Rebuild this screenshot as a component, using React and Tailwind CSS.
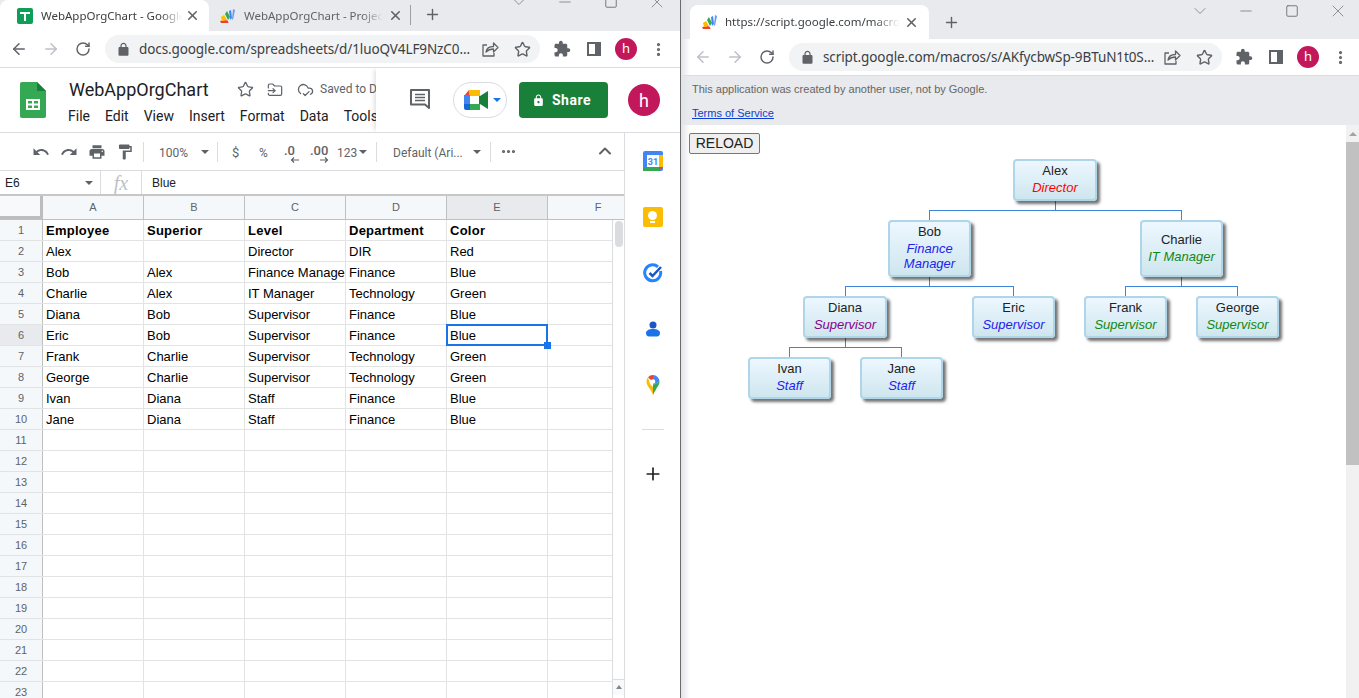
import React from "react";
import { ArrowLeft, ArrowRight, RotateCw, Star, X, Plus, ChevronDown, Minus, Square, MoreVertical, ChevronUp, FolderInput, CloudCheck, MoreHorizontal } from "lucide-react";

const columns = ["A", "B", "C", "D", "E", "F"];
const rows = [
  ["Employee", "Superior", "Level", "Department", "Color"],
  ["Alex", "", "Director", "DIR", "Red"],
  ["Bob", "Alex", "Finance Manager", "Finance", "Blue"],
  ["Charlie", "Alex", "IT Manager", "Technology", "Green"],
  ["Diana", "Bob", "Supervisor", "Finance", "Blue"],
  ["Eric", "Bob", "Supervisor", "Finance", "Blue"],
  ["Frank", "Charlie", "Supervisor", "Technology", "Green"],
  ["George", "Charlie", "Supervisor", "Technology", "Green"],
  ["Ivan", "Diana", "Staff", "Finance", "Blue"],
  ["Jane", "Diana", "Staff", "Finance", "Blue"],
];
const allRows = Array.from({ length: 23 }, (_, i) => rows[i] || ["", "", "", "", ""]);

const nodes = [
  { name: "Alex", title: "Director", color: "text-[#ff0000]", x: 332, y: 34, w: 84, h: 42 },
  { name: "Bob", title: "Finance Manager", color: "text-[#2222ee]", x: 207, y: 95, w: 83, h: 57 },
  { name: "Charlie", title: "IT Manager", color: "text-[#118811]", x: 459, y: 95, w: 83, h: 57 },
  { name: "Diana", title: "Supervisor", color: "text-[#880088]", x: 122, y: 171, w: 84, h: 42 },
  { name: "Eric", title: "Supervisor", color: "text-[#2222ee]", x: 291, y: 171, w: 83, h: 42 },
  { name: "Frank", title: "Supervisor", color: "text-[#118811]", x: 403, y: 171, w: 83, h: 42 },
  { name: "George", title: "Supervisor", color: "text-[#118811]", x: 515, y: 171, w: 83, h: 42 },
  { name: "Ivan", title: "Staff", color: "text-[#2222ee]", x: 67, y: 232, w: 83, h: 42 },
  { name: "Jane", title: "Staff", color: "text-[#2222ee]", x: 179, y: 232, w: 83, h: 42 },
];

// material style filled icons
const Mat = ({ d, size = 18, className = "", color = "#5f6368" }) => (
  <svg width={size} height={size} viewBox="0 0 24 24" className={className}>
    <path d={d} fill={color} />
  </svg>
);
const undoPath = "M12.5 8c-2.65 0-5.05.99-6.9 2.6L2 7v9h9l-3.62-3.62c1.39-1.16 3.16-1.88 5.12-1.88 3.54 0 6.55 2.31 7.6 5.5l2.37-.78C21.08 11.03 17.15 8 12.5 8z";
const redoPath = "M18.4 10.6C16.55 8.99 14.15 8 11.5 8c-4.65 0-8.58 3.03-9.96 7.22L3.9 16c1.05-3.19 4.05-5.5 7.6-5.5 1.95 0 3.73.72 5.12 1.88L13 16h9V7l-3.6 3.6z";
const printPath = "M19 8H5c-1.66 0-3 1.34-3 3v6h4v4h12v-4h4v-6c0-1.66-1.34-3-3-3zm-3 11H8v-5h8v5zm3-7c-.55 0-1-.45-1-1s.45-1 1-1 1 .45 1 1-.45 1-1 1zm-1-9H6v4h12V3z";
const paintPath = "M18 4V3c0-.55-.45-1-1-1H5c-.55 0-1 .45-1 1v4c0 .55.45 1 1 1h12c.55 0 1-.45 1-1V6h1v4H9v11c0 .55.45 1 1 1h2c.55 0 1-.45 1-1v-9h8V4h-3z";
const puzzlePath = "M20.5 11H19V7c0-1.1-.9-2-2-2h-4V3.5C13 2.12 11.88 1 10.5 1S8 2.12 8 3.5V5H4c-1.1 0-1.99.9-1.99 2v3.8H3.5c1.49 0 2.7 1.21 2.7 2.7s-1.21 2.7-2.7 2.7H2V20c0 1.1.9 2 2 2h3.8v-1.500c0-1.49 1.21-2.7 2.7-2.7 1.49 0 2.7 1.21 2.7 2.7V22H17c1.1 0 2-.9 2-2v-4h1.5c1.38 0 2.5-1.12 2.5-2.5S21.88 11 20.5 11z";
const lockPath = "M18 8h-1V6c0-2.76-2.24-5-5-5S7 3.24 7 6v2H6c-1.1 0-2 .9-2 2v10c0 1.1.9 2 2 2h12c1.1 0 2-.9 2-2V10c0-1.1-.9-2-2-2zm-6 9c-1.1 0-2-.9-2-2s.9-2 2-2 2 .9 2 2-.9 2-2 2zm3.100-9H8.900V6c0-1.710 1.390-3.100 3.100-3.100 1.710 0 3.100 1.390 3.100 3.100v2z";
const solidLockPath = "M18 8h-1V6c0-2.76-2.24-5-5-5S7 3.24 7 6v2H6c-1.1 0-2 .9-2 2v10c0 1.1.9 2 2 2h12c1.1 0 2-.9 2-2V10c0-1.1-.9-2-2-2zM9 8V6c0-1.66 1.34-3 3-3s3 1.340 3 3v2z";

const SheetsTabIcon = () => (
  <svg width="16" height="16" viewBox="0 0 16 16" className="shrink-0">
    <rect width="16" height="16" rx="2" fill="#0f9d58" />
    <path d="M3 4h10v2H9v7H7V6H3z" fill="#fff" />
  </svg>
);

const ScriptIcon = () => (
  <svg width="16" height="16" viewBox="0 0 16 16" className="shrink-0">
    <path d="M0 13l6-1 2 1 .5 2H1z" fill="#ea4335" />
    <path d="M1 9l3-2 3 5-5 1z" fill="#fbbc04" />
    <path d="M5 6l2-3 3 6-2 3z" fill="#34a853" />
    <path d="M9 3l2-1 1 8-2 2z" fill="#4285f4" />
    <path d="M13 1l2 1-2 10-1-1z" fill="#669df6" />
  </svg>
);

const PageShareIcon = ({ className }) => (
  <svg width="18" height="18" viewBox="0 0 18 18" className={className} fill="none" stroke="#5f6368" strokeWidth="1.300" strokeLinejoin="round">
    <path d="M6 5H2v11h11v-3" />
    <path d="M5 12c.5-3.500 3.500-5.500 7.500-5.500V3L17 7.500 12.500 12V9c-3 0-5.500 1-7.500 3z" />
  </svg>
);

const SidePanelIcon = () => (
  <div className="w-[14px] h-[14px] border-[2px] border-[#5f6368] flex justify-end">
    <div className="w-[4px] h-full bg-[#5f6368]" />
  </div>
);

const Avatar = () => (
  <div className="w-[22px] h-[22px] rounded-full bg-[#c2185b] text-white text-[13px] flex items-center justify-center font-['Noto_Sans',sans-serif]">h</div>
);

const ChromeButton = ({ x, children }) => (
  <div className="absolute top-0 bottom-0 flex items-center justify-center w-[24px] -ml-[12px]" style={{ left: x }}>
    {children}
  </div>
);

// navShift moves back/forward/reload and the pill start, toolShift the things on the right
const BrowserToolbar = ({ url, backDim, navShift = 0, toolShift = 0 }) => (
  <div className="relative h-[37px] shrink-0 bg-white border-b border-[#dadce0]">
    <ChromeButton x={19 + navShift}><ArrowLeft size={18} strokeWidth={2} className={backDim ? "text-[#bdc1c6]" : "text-[#5f6368]"} /></ChromeButton>
    <ChromeButton x={51 + navShift}><ArrowRight size={18} strokeWidth={2} className="text-[#bdc1c6]" /></ChromeButton>
    <ChromeButton x={83 + navShift}><RotateCw size={16} strokeWidth={2.2} className="text-[#5f6368]" /></ChromeButton>
    <div
      className="absolute top-[4px] h-[28px] rounded-full bg-[#f1f3f4] flex items-center pl-[11px]"
      style={{ left: 105 + navShift, width: 435 + toolShift - navShift }}
    >
      <Mat d={solidLockPath} size={15} className="shrink-0" />
      <span className="ml-[8px] text-[13.5px] text-[#3c4043] whitespace-nowrap font-['Noto_Sans',sans-serif] tracking-[-0.1px]">{url}</span>
      <PageShareIcon className="absolute right-[41px]" />
      <Star size={17} strokeWidth={2} className="absolute right-[9px] text-[#5f6368]" />
    </div>
    <ChromeButton x={562 + toolShift}><Mat d={puzzlePath} size={18} /></ChromeButton>
    <ChromeButton x={594 + toolShift}><SidePanelIcon /></ChromeButton>
    <ChromeButton x={626 + toolShift}><Avatar /></ChromeButton>
    <ChromeButton x={658 + toolShift}><MoreVertical size={17} strokeWidth={2.5} className="text-[#5f6368]" /></ChromeButton>
  </div>
);

const WindowControls = ({ top }) => (
  <div className="absolute left-[496px] flex text-[#6f7377]" style={{ top }}>
    <div className="w-[46px] h-[14px] flex items-center justify-center"><ChevronDown size={20} strokeWidth={0.9} /></div>
    <div className="w-[46px] h-[14px] flex items-center justify-center"><Minus size={18} strokeWidth={1} /></div>
    <div className="w-[46px] h-[14px] flex items-center justify-center"><Square size={14} strokeWidth={1.600} /></div>
    <div className="w-[46px] h-[14px] flex items-center justify-center"><X size={20} strokeWidth={0.9} /></div>
  </div>
);

const ToolSep = () => <div className="w-px h-[20px] bg-[#dadce0]" />;
const Caret = () => <div className="w-0 h-0 border-x-[4px] border-x-transparent border-t-[4px] border-t-[#5f6368]" />;

const SheetsHeader = () => (
  <div className="relative h-[65px] shrink-0 bg-white border-b border-[#dadce0] overflow-hidden font-['Roboto',sans-serif]">
    <svg className="absolute left-[20px] top-[14px]" width="26" height="36" viewBox="0 0 26 36">
      <path d="M2 0h15l9 9v25a2 2 0 0 1-2 2H2a2 2 0 0 1-2-2V2a2 2 0 0 1 2-2z" fill="#34a853" />
      <path d="M17 0l9 9h-9z" fill="#188038" />
      <path d="M6 17h14v11H6zm2 2v2.500h4V19zm6 0v2.500h4V19zm-6 4.500V26h4v-2.500zm6 0V26h4v-2.500z" fill="#fff" fillRule="evenodd" />
    </svg>
    <span className="absolute left-[69px] top-[10px] text-[18px] leading-[24px] text-[#202124]">WebAppOrgChart</span>
    <Star size={17} strokeWidth={1.8} className="absolute left-[237px] top-[13px] text-[#5f6368]" />
    <FolderInput size={16} strokeWidth={1.8} className="absolute left-[267px] top-[14px] text-[#5f6368]" />
    <CloudCheck size={17} strokeWidth={1.8} className="absolute left-[297px] top-[13px] text-[#5f6368]" />
    <span className="absolute left-[320px] top-[13px] text-[12px] leading-[16px] text-[#5f6368] whitespace-nowrap">Saved to Drive</span>
    <div className="absolute left-[68px] top-[39px] flex gap-[15px] text-[14px] leading-[18px] text-[#202124]">
      <span>File</span>
      <span>Edit</span>
      <span>View</span>
      <span>Insert</span>
      <span>Format</span>
      <span>Data</span>
      <span>Tools</span>
    </div>
    <div className="absolute left-[376px] right-0 top-0 bottom-0 bg-white shadow-[-4px_0_4px_-2px_rgba(0,0,0,0.12)]">
      <svg className="absolute left-[34px] top-[21px]" width="20" height="20" viewBox="0 0 20 20">
        <path d="M1 1h18v18l-4-3.500H1z" fill="none" stroke="#5f6368" strokeWidth="2" strokeLinejoin="round" />
        <path d="M5 5.500h10M5 8.500h10M5 11.500h10" stroke="#5f6368" strokeWidth="1.500" />
      </svg>
      <div className="absolute left-[77px] top-[14px] w-[54px] h-[36px] rounded-full border border-[#dadce0] flex items-center pl-[10px]">
        <svg width="24" height="20" viewBox="0 0 24 20">
          <path d="M5 0h11v6H5z" fill="#fbbc04" />
          <path d="M5 0v6H0z" fill="#ea4335" />
          <path d="M0 5h6v9H0z" fill="#4285f4" />
          <path d="M0 14h6v6H2a2 2 0 0 1-2-2z" fill="#1967d2" />
          <path d="M6 14h10v6H6z" fill="#34a853" />
          <path d="M6 6h9v8H6z" fill="#fff" />
          <path d="M15 6l1 0 8-5v18l-8-5-1 0z" fill="#188038" />
        </svg>
        <div className="ml-[5px] w-0 h-0 border-x-[4px] border-x-transparent border-t-[4px] border-t-[#1a73e8]" />
      </div>
      <div className="absolute left-[143px] top-[14px] w-[89px] h-[36px] rounded-[4px] bg-[#188038] text-white flex items-center justify-center gap-[7px] pr-[4px] text-[14px] font-bold tracking-[0.5px]">
        <Mat d={lockPath} size={13} color="#fff" />
        <span>Share</span>
      </div>
      <div className="absolute left-[252px] top-[16px] w-[32px] h-[32px] rounded-full bg-[#c2185b] text-white text-[18px] flex items-center justify-center">h</div>
    </div>
  </div>
);

const SheetsToolbar = () => (
  <div className="relative h-[38px] shrink-0 bg-white border-b border-[#dadce0] font-['Roboto',sans-serif] text-[12px] text-[#5f6368]">
    <Mat d={undoPath} className="absolute left-[32px] top-[10px]" />
    <Mat d={redoPath} className="absolute left-[60px] top-[10px]" />
    <Mat d={printPath} className="absolute left-[88px] top-[10px]" />
    <Mat d={paintPath} className="absolute left-[116px] top-[10px]" />
    <div className="absolute left-[143px] top-[9px]"><ToolSep /></div>
    <span className="absolute left-[159px] top-[11px]">100%</span>
    <div className="absolute left-[201px] top-[17px]"><Caret /></div>
    <div className="absolute left-[217px] top-[9px]"><ToolSep /></div>
    <span className="absolute left-[232px] top-[10px] text-[13px]">$</span>
    <span className="absolute left-[259px] top-[11px]">%</span>
    <span className="absolute left-[284px] top-[8px] text-[13px] font-medium">.0</span>
    <svg className="absolute left-[290px] top-[24px]" width="9" height="6" viewBox="0 0 9 6"><path d="M9 3H2M4 .5L1.500 3 4 5.500" fill="none" stroke="#5f6368" strokeWidth="1.200" /></svg>
    <span className="absolute left-[310px] top-[8px] text-[13px] font-medium">.00</span>
    <svg className="absolute left-[320px] top-[24px]" width="9" height="6" viewBox="0 0 9 6"><path d="M0 3h7M5 .5L7.500 3 5 5.500" fill="none" stroke="#5f6368" strokeWidth="1.200" /></svg>
    <span className="absolute left-[337px] top-[11px]">123</span>
    <div className="absolute left-[359px] top-[17px]"><Caret /></div>
    <div className="absolute left-[376px] top-[9px]"><ToolSep /></div>
    <span className="absolute left-[393px] top-[11px]">Default (Ari...</span>
    <div className="absolute left-[473px] top-[17px]"><Caret /></div>
    <div className="absolute left-[490px] top-[9px]"><ToolSep /></div>
    <MoreHorizontal size={17} strokeWidth={2.5} className="absolute left-[500px] top-[10px]" />
    <ChevronUp size={20} strokeWidth={2.4} className="absolute left-[595px] top-[8px]" />
  </div>
);

const FormulaBar = () => (
  <div className="h-[25px] shrink-0 flex items-center bg-white border-b-2 border-[#c7c7c7] font-['Liberation_Sans',sans-serif] text-[12px] text-[#202124]">
    <div className="w-[101px] h-full flex items-center justify-between pl-[5px] pr-[7px] border-r border-[#dadce0]">
      <span>E6</span>
      <Caret />
    </div>
    <div className="w-[41px] h-full flex items-center justify-center border-r border-[#dadce0] font-['Liberation_Serif',serif] italic text-[#bdc1c6] text-[20px]">fx</div>
    <span className="ml-[10px]">Blue</span>
  </div>
);

const SheetGrid = () => (
  <div className="relative flex-1 min-h-0 overflow-hidden bg-white font-['Liberation_Sans',sans-serif] text-[13px] text-black">
    <div className="flex h-[24px] border-b border-[#c0c0c0] bg-[#f4f8fb] text-[11px] text-[#5f6368]">
      <div className="w-[43px] shrink-0 bg-[#f8f9fa] border-r-[3px] border-b-[3px] border-[#bdbdbd]" />
      {columns.map((c) => (
        <div key={c} className={`w-[101px] shrink-0 flex items-center justify-center border-r border-[#c0c0c0] ${c === "E" ? "bg-[#e8eaed]" : ""}`}>{c}</div>
      ))}
    </div>
    {allRows.map((row, r) => (
      <div key={r} className="flex h-[21px] border-b border-[#e2e3e3]">
        <div className={`w-[43px] shrink-0 flex items-center justify-center border-r border-[#c0c0c0] text-[11px] text-[#5f6368] ${r === 5 ? "bg-[#e8eaed]" : "bg-[#f4f8fb]"}`}>{r + 1}</div>
        {columns.map((c, i) => (
          <div key={c} className={`w-[101px] shrink-0 border-r border-[#e2e3e3] pl-[3px] leading-[21px] overflow-hidden whitespace-nowrap ${r === 0 ? "font-bold tracking-[0.25px]" : ""}`}>{row[i]}</div>
        ))}
      </div>
    ))}
    {/* selected cell */}
    <div className="absolute left-[446px] top-[128px] w-[102px] h-[22px] border-2 border-[#1a73e8]" />
    <div className="absolute left-[544px] top-[146px] w-[7px] h-[7px] bg-[#1a73e8]" />
    {/* scrollbar */}
    <div className="absolute left-[612px] top-[24px] bottom-0 w-[13px] bg-white border-x border-[#dadce0]">
      <div className="absolute left-[2px] top-[1px] w-[8px] h-[26px] rounded-full bg-[#dadce0]" />
      <div className="absolute left-0 right-0 top-[459px] h-[16px] bg-[#f8f9fa] border-t border-[#dadce0] flex items-start justify-center pt-[5px]">
        <div className="w-0 h-0 border-x-[3px] border-x-transparent border-b-[4px] border-b-[#80868b]" />
      </div>
    </div>
  </div>
);

const SidePanel = () => (
  <div className="w-[56px] shrink-0 flex flex-col items-center pt-[18px] bg-white border-l border-[#dadce0]">
    <svg width="20" height="20" viewBox="0 0 20 20">
      <rect width="20" height="20" rx="2" fill="#4285f4" />
      <rect x="4" y="4" width="12" height="12" fill="#fff" />
      <rect x="16" y="4" width="4" height="12" fill="#fbbc04" />
      <rect x="0" y="16" width="16" height="4" fill="#34a853" />
      <path d="M16 16h4l-4 4z" fill="#ea4335" />
      <text x="10" y="14" textAnchor="middle" fontSize="9" fontWeight="700" fill="#4285f4" fontFamily="Roboto">31</text>
    </svg>
    <div className="mt-[36px] w-[20px] h-[20px] rounded-[2px] bg-[#fbbc04] flex flex-col items-center justify-center">
      <div className="w-[9px] h-[9px] rounded-full bg-white" />
      <div className="w-[5px] h-[2px] mt-[1px] bg-white" />
    </div>
    <svg className="mt-[36px]" width="20" height="20" viewBox="0 0 20 20">
      <path d="M15 3.800A8 8 0 1 0 17.500 8" fill="none" stroke="#2684fc" strokeWidth="3" />
      <path d="M6.500 10l3 3 8.500-9" fill="none" stroke="#1a56c4" strokeWidth="2.500" />
    </svg>
    <svg className="mt-[36px]" width="20" height="20" viewBox="0 0 20 20">
      <circle cx="10" cy="6" r="3.500" fill="#1a56c4" />
      <path d="M3 14c0-2.500 3-4 7-4s7 1.500 7 4-1.500 3.500-3 3.500H6c-1.500 0-3-1-3-3.500z" fill="#1a73e8" />
    </svg>
    <svg className="mt-[36px]" width="20" height="20" viewBox="0 0 20 20">
      <path d="M10 0a6.500 6.500 0 0 1 6.500 6.500L10 10z" fill="#4285f4" />
      <path d="M10 0a6.500 6.500 0 0 0-5 2.300L10 7z" fill="#ea4335" />
      <path d="M3.500 6.500C3.500 11 8 14 10 20c.6-2 1.700-3.500 3-5L7 9 5 2.300a6.500 6.500 0 0 0-1.500 4.200z" fill="#fbbc04" />
      <path d="M16.500 6.500c0 4-3 5.500-6.500 13.500l0-10z" fill="#34a853" />
      <circle cx="10" cy="6.500" r="2.300" fill="#fff" />
    </svg>
    <div className="mt-[34px] w-[22px] h-px bg-[#dadce0]" />
    <Plus size={20} strokeWidth={2} className="mt-[34px] text-[#202124]" />
  </div>
);

const OrgNode = ({ node }) => (
  <div
    className="absolute rounded-[4px] border-2 border-[#aed6e8] bg-gradient-to-b from-[#edf7ff] to-[#cfe6ee] shadow-[3px_3px_3px_rgba(0,0,0,0.55)] flex flex-col items-center justify-center text-center font-['Liberation_Sans',sans-serif] text-[13px] leading-[15px] text-[#222] px-[2px] pb-[2px]"
    style={{ left: node.x, top: node.y, width: node.w, height: node.h }}
  >
    <div className="mb-[2px]">{node.name}</div>
    <div className={`italic ${node.color} ${node.name === "Bob" ? "w-[60px]" : ""}`}>{node.title}</div>
  </div>
);

const OrgLines = () => (
  <svg className="absolute left-0 top-0" width="665" height="573" fill="none" stroke="#3d85d8" strokeWidth="1">
    <path d="M374.500 76v9M248.500 85.500H500.500M248.500 85v10M500.500 85v10" />
    <path d="M248.500 152v9.500M164.500 161.500H332.500M164.500 161v10M332.500 161v10" />
    <path d="M500.500 152v9.500M444.500 161.500H556.500M444.500 161v10M556.500 161v10" />
    <path d="M164.500 213v9.500M108.500 222.500H220.500M108.500 222v10M220.500 222v10" />
  </svg>
);

const LeftWindow = () => (
  <div className="w-[680px] shrink-0 h-full flex flex-col border-r border-[#6b6b6b] box-content overflow-hidden">
    <div className="relative h-[31px] shrink-0 bg-[#e8eaed] font-['Noto_Sans',sans-serif] text-[11.5px]">
      <div className="absolute left-0 top-0 w-[209px] h-full bg-white rounded-t-[8px] flex items-center pl-[17px]">
        <SheetsTabIcon />
        <span className="ml-[8px] w-[141px] overflow-hidden whitespace-nowrap text-[#3c4043] [mask-image:linear-gradient(to_right,black_85%,transparent)]">WebAppOrgChart - Google Sheets</span>
        <X size={15} strokeWidth={2.5} className="ml-[3px] text-[#5f6368]" />
      </div>
      <div className="absolute left-[220px] top-0 h-full flex items-center">
        <ScriptIcon />
        <span className="ml-[8px] w-[139px] overflow-hidden whitespace-nowrap text-[#5f6368] [mask-image:linear-gradient(to_right,black_85%,transparent)]">WebAppOrgChart - Project Editor</span>
        <X size={15} strokeWidth={2.5} className="ml-[5px] text-[#5f6368]" />
      </div>
      <div className="absolute left-[410px] top-[5px] w-px h-[20px] bg-[#9aa0a6]" />
      <Plus size={17} strokeWidth={2} className="absolute left-[424px] top-[6px] text-[#5f6368]" />
      <WindowControls top={-5} />
    </div>
    <BrowserToolbar url="docs.google.com/spreadsheets/d/1luoQV4LF9NzC0..." />
    <SheetsHeader />
    <div className="flex-1 min-h-0 flex">
      <div className="w-[624px] shrink-0 flex flex-col">
        <SheetsToolbar />
        <FormulaBar />
        <SheetGrid />
      </div>
      <SidePanel />
    </div>
  </div>
);

const RightWindow = () => (
  <div className="relative flex-1 min-w-0 h-full flex flex-col overflow-hidden bg-white">
    <div className="relative h-[39px] shrink-0 bg-[#e8eaed] font-['Noto_Sans',sans-serif] text-[11.5px]">
      <div className="absolute left-[9px] top-[5px] w-[239px] h-[34px] bg-white rounded-t-[8px] flex items-center pl-[12px]">
        <ScriptIcon />
        <span className="ml-[7px] w-[175px] overflow-hidden whitespace-nowrap text-[#3c4043] [mask-image:linear-gradient(to_right,black_85%,transparent)]">https://script.google.com/macros/s/AKfy</span>
        <X size={15} strokeWidth={2.5} className="ml-[4px] text-[#5f6368]" />
      </div>
      <Plus size={17} strokeWidth={2} className="absolute left-[262px] top-[14px] text-[#5f6368]" />
      <WindowControls top={4} />
    </div>
    <BrowserToolbar url="script.google.com/macros/s/AKfycbwSp-9BTuN1t0S..." backDim navShift={3} toolShift={1} />
    <div className="h-[49px] shrink-0 bg-[#e8eaed] pl-[11px] font-['Liberation_Sans',sans-serif] text-[11px] leading-[12px]">
      <div className="pt-[7px] text-[#666]">This application was created by another user, not by Google.</div>
      <div className="pt-[12px] text-[#0b3fd1] underline">Terms of Service</div>
    </div>
    <div className="relative flex-1 min-h-0 overflow-hidden">
      <button className="absolute left-[8px] top-[8px] h-[21px] w-[71px] rounded-[2px] border border-[#767676] bg-[#efefef] text-[14px] leading-[19px] text-[#222] font-['Liberation_Sans',sans-serif]">RELOAD</button>
      <OrgLines />
      {nodes.map((n) => <OrgNode key={n.name} node={n} />)}
      {/* page scrollbar */}
      <div className="absolute right-0 top-0 bottom-0 w-[13px] bg-[#f1f1f1]">
        <div className="h-[17px] flex items-center justify-center">
          <div className="w-0 h-0 border-x-[4px] border-x-transparent border-b-[4px] border-b-[#a3a3a3]" />
        </div>
        <div className="h-[323px] bg-[#c1c1c1]" />
      </div>
    </div>
    {/* soft edge next to the other window */}
    <div className="absolute left-0 top-0 bottom-0 w-[9px] bg-gradient-to-r from-[#e4e4e8] to-transparent pointer-events-none" />
  </div>
);

export default function App() {
  return (
    <div className="w-[1359px] h-[698px] flex overflow-hidden bg-white">
      <LeftWindow />
      <RightWindow />
    </div>
  );
}
